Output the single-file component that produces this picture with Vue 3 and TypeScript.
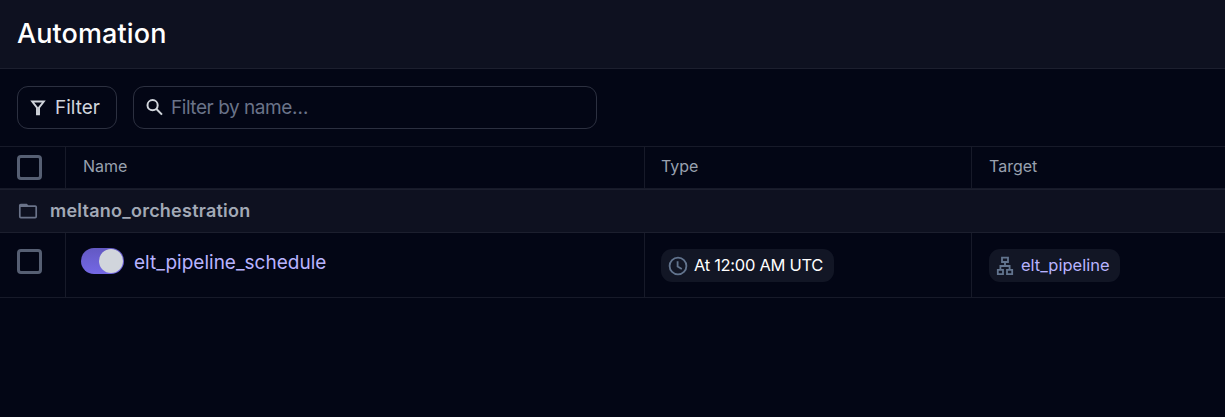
<script setup lang="ts">
interface Automation {
  name: string
  schedule: string
  target: string
}

interface Group {
  name: string
  items: Automation[]
}

const groups: Group[] = [
  {
    name: 'meltano_orchestration',
    items: [{ name: 'elt_pipeline_schedule', schedule: 'At 12:00 AM UTC', target: 'elt_pipeline' }],
  },
]
</script>

<template>
  <main class="page">
    <header class="header"><h1 class="title">Automation</h1></header>

    <div class="toolbar">
      <button class="filter" type="button">
        <svg class="funnel" width="16" height="16" viewBox="0 0 16 16" fill="none" stroke="currentColor" stroke-width="1.9">
          <path d="M2.2 1.5H13.8L9 7.6V14.4H7V7.6Z" />
        </svg>
        <span class="filter-label">Filter</span>
      </button>
      <div class="search">
        <svg width="17" height="17" viewBox="0 0 17 17" fill="none" stroke="currentColor" stroke-width="2">
          <circle cx="6.6" cy="6.2" r="5.1" />
          <path d="M10.2 9.8L16 15.6" />
        </svg>
        <span class="placeholder">Filter by name…</span>
      </div>
    </div>

    <section class="table">
      <div class="row head">
        <div class="cell check"><span class="box"></span></div>
        <div class="cell"><span class="th name-th">Name</span></div>
        <div class="cell"><span class="th">Type</span></div>
        <div class="cell"><span class="th">Target</span></div>
      </div>

      <template v-for="group in groups" :key="group.name">
        <div class="group">
          <svg width="20" height="16" viewBox="0 0 20 16" fill="none" stroke="currentColor" stroke-width="1.7">
            <path d="M1.8 3V13.6Q1.8 14.6 2.8 14.6H17.2Q18.2 14.6 18.2 13.6V4.1Q18.2 3.1 17.2 3.1H10L8.4 1.5H2.8Q1.8 1.5 1.8 2.5V3.1H10" />
          </svg>
          <span class="group-name">{{ group.name }}</span>
        </div>

        <div v-for="item in group.items" :key="item.name" class="row item">
          <div class="cell check"><span class="box"></span></div>
          <div class="cell">
            <span class="switch"><span class="knob"></span></span>
            <a class="item-name">{{ item.name }}</a>
          </div>
          <div class="cell">
            <span class="tag">
              <svg width="20" height="20" viewBox="0 0 20 20" fill="none" stroke="currentColor" stroke-width="1.8">
                <circle cx="10" cy="10" r="8.4" />
                <path d="M9.6 5.2V10.5L13.8 13" />
              </svg>
              <span class="schedule">{{ item.schedule }}</span>
            </span>
          </div>
          <div class="cell">
            <span class="tag target">
              <svg width="18" height="20" viewBox="0 0 18 20" fill="none" stroke="currentColor" stroke-width="1.8">
                <path d="M6 1.7H12V6H6ZM1.8 13.9H7V18.2H1.8ZM11 13.9H16.2V18.2H11ZM9 6V10M4.4 13.9V10H13.6V13.9" />
              </svg>
              <a class="target-name">{{ item.target }}</a>
            </span>
          </div>
        </div>
      </template>
    </section>
  </main>
</template>

<style>
body {
  background: #030615;
}
</style>

<style scoped>
.page {
  height: 417px;
  overflow: hidden;
  background: #030615;
  color: #d1d5dc;
  font-family: Inter, "Liberation Sans", sans-serif;
  white-space: nowrap;
}
.page * {
  box-sizing: border-box;
}
.header {
  display: flex;
  align-items: center;
  height: 69px;
  padding: 0 17px 2px;
  background: #0e1120;
  border-bottom: 1px solid #1c1f2e;
}
.title {
  margin: 0;
  color: #fff;
  font-size: 27px;
  font-weight: 500;
  letter-spacing: 0.1px;
}
.toolbar {
  display: flex;
  gap: 16px;
  height: 77px;
  padding: 17px;
}
.filter,
.search {
  display: flex;
  align-items: center;
  height: 43px;
  border: 1px solid #2c3040;
  border-radius: 11px;
  background: transparent;
  color: #d1d5dc;
}
.filter {
  width: 100px;
  padding: 0 0 0 12px;
  gap: 9px;
  font: inherit;
}
.filter-label {
  font-size: 19px;
}
.search {
  width: 464px;
  padding-left: 12px;
  gap: 8px;
}
.placeholder {
  color: #6a7389;
  font-size: 19px;
  letter-spacing: -0.45px;
}
.row {
  display: grid;
  grid-template-columns: 66px 579px 327px 1fr;
}
.head {
  height: 43px;
  border-top: 1px solid #171a29;
  border-bottom: 1px solid #171a29;
}
.item {
  height: 65px;
  border-bottom: 1px solid #171a29;
}
.cell {
  display: flex;
  align-items: center;
  padding-left: 17px;
  border-right: 1px solid #171a29;
}
.cell:last-child {
  border-right: 0;
}
.head .cell {
  padding-bottom: 3px;
}
.head .check {
  padding-bottom: 0;
}
.item .cell {
  align-items: flex-start;
  padding-top: 16px;
}
.cell:nth-child(2),
.cell:nth-child(3) {
  padding-left: 16px;
}
.box {
  width: 25px;
  height: 25px;
  border: 3px solid #565f73;
  border-radius: 4px;
}
.th {
  color: #99a1af;
  font-size: 16px;
}
.name-th {
  padding-left: 1px;
}
.group {
  display: flex;
  align-items: center;
  gap: 12px;
  height: 44px;
  padding: 0 0 1px 18px;
  background: #0e1120;
  border-top: 1px solid #1c1f2e;
  border-bottom: 1px solid #1c1f2e;
  color: #6a7389;
}
.group-name {
  padding-bottom: 1px;
  color: #a2a9b6;
  font-size: 18px;
  font-weight: 600;
  letter-spacing: 0.24px;
}
.switch {
  display: flex;
  justify-content: flex-end;
  width: 43px;
  height: 26px;
  margin: -1px 10px 0 -1px;
  padding: 1px;
  border-radius: 13px;
  background: linear-gradient(#6359c3, #7468e5);
}
.knob {
  width: 24px;
  height: 24px;
  border-radius: 50%;
  background: #d1d5dc;
}
.item-name {
  color: #b8b3ff;
  font-size: 19px;
  line-height: 28px;
}
.tag {
  display: flex;
  align-items: center;
  width: 173px;
  height: 33px;
  padding-left: 7px;
  gap: 6px;
  border-radius: 11px;
  background: #121625;
  color: #62748e;
}
.target {
  width: 131px;
  gap: 7px;
}
.schedule,
.target-name {
  padding-bottom: 1px;
  font-size: 16.5px;
}
.schedule {
  color: #fff;
  letter-spacing: -0.3px;
}
.target-name {
  color: #b8b3ff;
}
</style>
